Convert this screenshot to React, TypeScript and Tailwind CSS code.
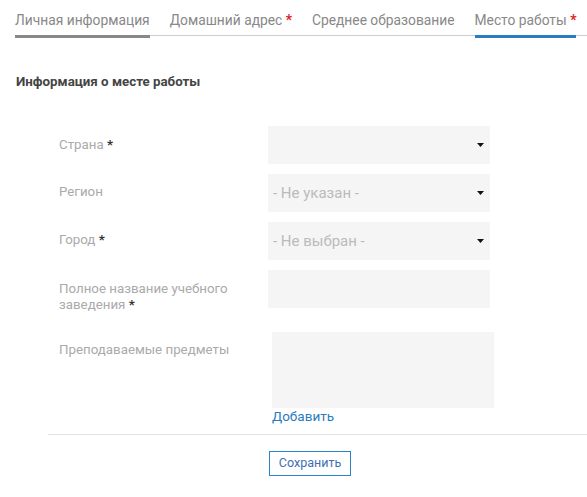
import React from 'react';

const tabs = [
  { label: 'Личная информация', req: false, state: 'done' },
  { label: 'Домашний адрес', req: true, state: 'none' },
  { label: 'Среднее образование', req: false, state: 'none' },
  { label: 'Место работы', req: true, state: 'active' },
];

function Arrow() {
  return (
    <svg className="w-[7px] h-[4px]" viewBox="0 0 7 4" fill="#111">
      <path d="M0 0h7L3.5 4z" />
    </svg>
  );
}

function Select({ value }: { value?: string }) {
  return (
    <div className="w-[222px] h-[38px] bg-[#f5f5f5] flex items-center justify-between pl-[5px] pr-[6px] text-[15px] text-[#bbb]">
      <span>{value}</span>
      <Arrow />
    </div>
  );
}

function Label({ text, req, pt }: { text: React.ReactNode; req?: boolean; pt: string }) {
  return (
    <div className={`w-[209px] shrink-0 pr-6 text-[13.3px] leading-4 text-[#aaa] ${pt}`}>
      {text}
      {req && <span className="text-[#333] font-bold"> *</span>}
    </div>
  );
}

export default function App() {
  return (
    <div className="w-[587px] h-[497px] bg-white font-['Roboto',sans-serif] overflow-hidden">
      <ul className="ml-[15px] flex h-[36px] border-b border-[#cfcfcf]">
        {tabs.map(t => (
          <li
            key={t.label}
            className={`mr-5 shrink-0 whitespace-nowrap pt-[10px] h-[38px] text-[13.8px] leading-5 text-[#888] border-b-[3px] ${
              t.state === 'done' ? 'border-[#888]' : t.state === 'active' ? 'border-[#2b7bc1]' : 'border-transparent'
            }`}
          >
            {t.label}
            {t.req && <span className="text-[#e21b1b] font-bold"> *</span>}
          </li>
        ))}
      </ul>

      <h2 className="mt-[38px] ml-[16px] text-[13.3px] leading-4 font-bold text-[#444]">
        Информация о месте работы
      </h2>

      <div className="mt-[36px] ml-[59px] flex flex-col">
        <div className="flex">
          <Label text="Страна" req pt="pt-[11px]" />
          <Select />
        </div>
        <div className="flex mt-[10px]">
          <Label text="Регион" pt="pt-[10px]" />
          <Select value="- Не указан -" />
        </div>
        <div className="flex mt-[10px]">
          <Label text="Город" req pt="pt-[10px]" />
          <Select value="- Не выбран -" />
        </div>
        <div className="flex mt-[10px] h-[38px]">
          <Label text="Полное название учебного заведения" req pt="pt-[11px]" />
          <div className="w-[222px] h-[38px] bg-[#f5f5f5]" />
        </div>
        <div className="flex mt-[24px]">
          <Label text="Преподаваемые предметы" pt="pt-[10px]" />
          <div className="ml-[4px]">
            <div className="w-[222px] h-[76px] bg-[#f5f5f5]" />
            <a className="block text-[13.5px] leading-4 text-[#2b7bc1] cursor-pointer">Добавить</a>
          </div>
        </div>
      </div>

      <div className="mt-[10px] ml-[48px] border-t border-[#dde3e8]" />

      <button className="block mt-[16px] ml-[269px] w-[82px] h-[25px] border border-[#2b82cc] text-[12.5px] leading-none text-[#3d6fb6] bg-white">
        Сохранить
      </button>
    </div>
  );
}
